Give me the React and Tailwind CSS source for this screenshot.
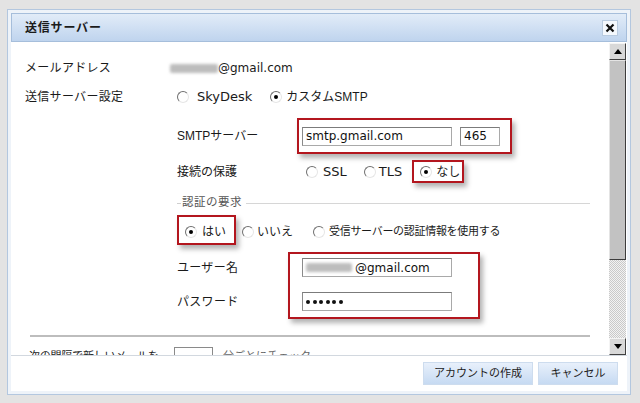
import React from "react";

const JP = "font-['Liberation_Sans','Noto_Sans_CJK_JP',sans-serif]";
const VD = "font-['DejaVu_Sans','Noto_Sans_CJK_JP',sans-serif]";

function Radio({ checked }) {
  return (
    <span className="w-[12px] h-[12px] shrink-0 rounded-full border border-t-[#6f6f6f] border-l-[#6f6f6f] border-r-[#e6e6e6] border-b-[#e6e6e6] bg-white flex items-center justify-center">
      {checked && <span className="w-[4px] h-[4px] rounded-full bg-black" />}
    </span>
  );
}

function Blur({ w }) {
  return (
    <span
      className="inline-block h-[9px] bg-[#bdbdbd] blur-[1.5px] rounded-[2px]"
      style={{ width: w }}
    />
  );
}

function Input({ className, children }) {
  return (
    <div
      className={
        "h-[19px] bg-white border border-[#a9a9a9] border-t-[#7b7b7b] border-l-[#8a8a8a] flex items-center pl-[3px] text-[12px] text-[#111] " +
        VD +
        " " +
        className
      }
    >
      {children}
    </div>
  );
}

function ScrollBtn({ up }) {
  return (
    <div className="h-[17px] shrink-0 bg-[#d8d8d8] border border-t-[#f4f4f4] border-l-[#f4f4f4] border-r-[#404040] border-b-[#404040] flex items-center justify-center">
      <svg width="8" height="5" viewBox="0 0 8 5">
        {up ? (
          <polygon points="0,5 8,5 4,0" fill="#000" />
        ) : (
          <polygon points="0,0 8,0 4,5" fill="#000" />
        )}
      </svg>
    </div>
  );
}

export default function App() {
  return (
    <div className={"w-[640px] h-[403px] bg-[#e3e3e3] pt-[9px] pl-[7px] overflow-hidden " + JP}>
      <div className="w-[624px] h-[386px] border border-[#b3c7df] bg-[#eef3f9] p-[3px] flex flex-col">
        {/* title bar */}
        <div className="h-[29px] shrink-0 border border-[#a6bedb] bg-linear-to-b from-[#e2ecf8] to-[#bfd4ee] flex items-center pl-[13px] pr-[8px]">
          <span className="text-[12px] font-bold text-[#1b1b1b] tracking-[0.8px]">送信サーバー</span>
          <div className="ml-auto w-[16px] h-[16px] bg-[#f4f8fd] border border-[#b9cbe0] flex items-center justify-center">
            <svg width="10" height="10" viewBox="0 0 10 10">
              <path d="M1.5 1.5 L8.5 8.5 M8.5 1.5 L1.5 8.5" stroke="#111" strokeWidth="2.2" />
            </svg>
          </div>
        </div>

        {/* content */}
        <div className="h-[313px] shrink-0 flex bg-white">
          <div className="flex-1 overflow-hidden pl-[14px] text-[12px] text-[#1a1a1a] flex flex-col">
            {/* email */}
            <div className="mt-[17px] h-[18px] flex items-center shrink-0">
              <span className="w-[145px] tracking-[0.3px]">メールアドレス</span>
              <Blur w="48px" />
              <span className={VD}>@gmail.com</span>
            </div>
            {/* server setting */}
            <div className="mt-[11px] h-[18px] flex items-center shrink-0">
              <span className="w-[152px] tracking-[0.3px]">送信サーバー設定</span>
              <Radio />
              <span className={"ml-[8px] text-[13px] " + VD}>SkyDesk</span>
              <span className="ml-[18px]"><Radio checked /></span>
              <span className="ml-[4px]">カスタムSMTP</span>
            </div>
            {/* SMTP server */}
            <div className="mt-[12px] ml-[152px] flex items-center shrink-0">
              <span className="w-[120px]">SMTPサーバー</span>
              <div className="w-[215px] h-[36px] border-2 border-[#b3161e] shadow-[3px_4px_5px_rgba(0,0,0,0.3)] flex items-center pl-[3px]">
                <Input className="w-[150px]">smtp.gmail.com</Input>
                <Input className="w-[40px] ml-[8px]">465</Input>
              </div>
            </div>
            {/* connection */}
            <div className="mt-[6px] ml-[152px] h-[23px] flex items-center shrink-0">
              <span className="w-[129px]">接続の保護</span>
              <Radio />
              <span className={"ml-[5px] text-[13px] " + VD}>SSL</span>
              <span className="ml-[17px]"><Radio /></span>
              <span className={"ml-[3px] text-[13px] " + VD}>TLS</span>
              <div className="ml-[10px] w-[52px] h-[23px] border-2 border-[#b3161e] shadow-[3px_4px_5px_rgba(0,0,0,0.3)] flex items-center pl-[6px]">
                <Radio checked />
                <span className="ml-[4px]">なし</span>
              </div>
            </div>
            {/* auth legend */}
            <div className="mt-[12px] ml-[152px] h-[16px] flex items-center shrink-0 pr-[19px]">
              <span className="w-[4px] h-px bg-[#cfcfcf]" />
              <span className="ml-[1px] text-[#555] text-[11.5px] tracking-[0.5px]">認証の要求</span>
              <span className="flex-1 h-px bg-[#d6d6d6] ml-[4px]" />
            </div>
            {/* auth options */}
            <div className="mt-[4px] ml-[152px] flex items-center shrink-0">
              <div className="w-[59px] h-[30px] border-2 border-[#b3161e] shadow-[3px_4px_5px_rgba(0,0,0,0.3)] flex items-center pl-[6px] pt-[3px]">
                <Radio checked />
                <span className="ml-[5px]">はい</span>
              </div>
              <div className="flex items-center pt-[3px]">
                <span className="ml-[6px]"><Radio /></span>
                <span className="ml-[3px]">いいえ</span>
                <span className="ml-[20px]"><Radio /></span>
                <span className="ml-[4px] text-[11px] tracking-[-0.3px]">受信サーバーの認証情報を使用する</span>
              </div>
            </div>
            {/* credentials */}
            <div className="mt-[7px] ml-[152px] flex shrink-0">
              <div className="w-[111px] flex flex-col pt-[6px] gap-[15px]">
                <div className="h-[19px] flex items-center tracking-[0.3px]">ユーザー名</div>
                <div className="h-[19px] flex items-center tracking-[0.3px]">パスワード</div>
              </div>
              <div className="w-[192px] h-[67px] border-2 border-[#b3161e] shadow-[3px_4px_5px_rgba(0,0,0,0.3)] flex flex-col pl-[12px] pt-[4px] gap-[15px]">
                <Input className="w-[150px]">
                  <Blur w="46px" />
                  <span className="ml-[3px]">@gmail.com</span>
                </Input>
                <Input className="w-[150px]">
                  <span className="flex gap-[2.5px]">
                    <span className="w-[4px] h-[4px] rounded-full bg-[#111]" />
                    <span className="w-[4px] h-[4px] rounded-full bg-[#111]" />
                    <span className="w-[4px] h-[4px] rounded-full bg-[#111]" />
                    <span className="w-[4px] h-[4px] rounded-full bg-[#111]" />
                    <span className="w-[4px] h-[4px] rounded-full bg-[#111]" />
                    <span className="w-[4px] h-[4px] rounded-full bg-[#111]" />
                  </span>
                </Input>
              </div>
            </div>
            {/* separator */}
            <div className="mt-[16px] ml-[5px] w-[560px] h-[2px] bg-[#bdbdbd] shrink-0" />
            {/* next row (clipped by the scroll area, as in the reference) */}
            <div className="mt-[10px] ml-[4px] h-[18px] flex items-center shrink-0">
              <span className="w-[145px] text-[11px] tracking-[-0.2px]">次の間隔で新しいメールを</span>
              <div className="w-[39px] h-[18px] border border-[#8a8a8a] bg-white" />
              <span className="ml-[10px] text-[#666] text-[11px]">分ごとにチェック</span>
            </div>
          </div>
          {/* scrollbar */}
          <div className="w-[17px] shrink-0 flex flex-col pt-[1px]">
            <ScrollBtn up />
            <div className="h-[200px] shrink-0 bg-[#c2c2c2] border border-t-[#e4e4e4] border-l-[#e4e4e4] border-r-[#3c3c3c] border-b-[#3c3c3c]" />
            <div className="flex-1 bg-[image:repeating-conic-gradient(#c9c9c9_0%_25%,#f2f2f2_0%_50%)] bg-[length:2px_2px]" />
            <ScrollBtn />
          </div>
          <div className="w-[1px] shrink-0" />
        </div>

        {/* footer */}
        <div className="h-[36px] shrink-0 bg-white border-t border-[#d2d8df] flex items-center justify-end pr-[9px] gap-[5px]">
          <div className="w-[110px] h-[23px] bg-linear-to-b from-[#e8f0fb] to-[#c6daf2] border border-[#cddcee] flex items-center justify-center text-[11px] text-[#222]">
            アカウントの作成
          </div>
          <div className="w-[80px] h-[23px] bg-linear-to-b from-[#e8f0fb] to-[#c6daf2] border border-[#cddcee] flex items-center justify-center text-[11px] text-[#222]">
            キャンセル
          </div>
        </div>
      </div>
    </div>
  );
}
